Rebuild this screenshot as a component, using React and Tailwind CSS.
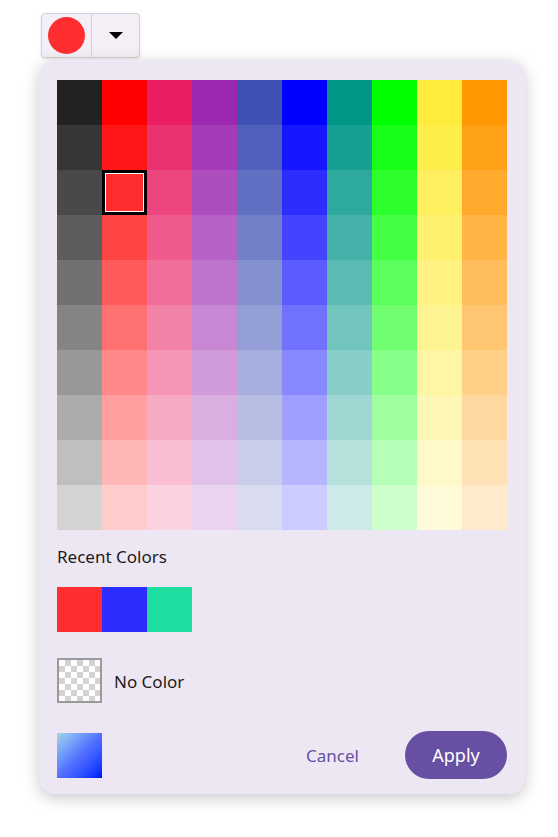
import React, { useState } from 'react';

const baseColors = [
  '#222222', '#ff0000', '#e91e63', '#9c27b0', '#3f51b5',
  '#0000ff', '#009688', '#00ff00', '#ffeb3b', '#ff9800',
];

// lighten towards white, one step per row
const tint = (hex, f) => {
  const n = parseInt(hex.slice(1), 16);
  const c = [(n >> 16) & 255, (n >> 8) & 255, n & 255].map(v => Math.round(v + (255 - v) * f));
  return `rgb(${c[0]}, ${c[1]}, ${c[2]})`;
};

const rows = Array.from({ length: 10 }, (_, i) => baseColors.map(c => tint(c, i * 0.089)));

const recentColors = ['#ff2d2f', '#2d2dff', '#1ddea0'];

const App = () => {
  const [selected, setSelected] = useState({ row: 2, col: 1 });

  return (
    <div className="min-h-screen bg-white pt-[13px] pl-[39px] font-['Noto_Sans','Open_Sans',sans-serif] text-[#1d1b20]">
      {/* Trigger */}
      <div className="ml-[2px] flex h-[45px] w-[99px] rounded-[4px] border border-[#d4d0d8] bg-[#f4eff7] shadow-sm">
        <div className="flex w-[50px] items-center justify-center border-r border-[#d4d0d8]">
          <div className="h-[37px] w-[37px] rounded-full bg-[#ff2d2f]" />
        </div>
        <div className="flex flex-1 items-center justify-center">
          <div className="h-0 w-0 border-x-[7px] border-t-[7px] border-x-transparent border-t-black" />
        </div>
      </div>

      {/* Popup */}
      <div className="mt-[2px] w-[486px] rounded-[16px] bg-[#ede7f3] px-[18px] pt-[20px] pb-[15px] shadow-[0_4px_16px_rgba(0,0,0,0.22)]">
        <div className="grid grid-cols-10">
          {rows.map((row, r) =>
            row.map((color, c) => {
              const isSel = selected.row === r && selected.col === c;
              return (
                <div
                  key={`${r}-${c}`}
                  onClick={() => setSelected({ row: r, col: c })}
                  className={`h-[45px] w-[45px] cursor-pointer ${isSel ? 'border-[3px] border-black' : ''}`}
                  style={{ backgroundColor: color }}
                >
                  {isSel && <div className="h-full w-full border border-white" />}
                </div>
              );
            })
          )}
        </div>

        <div className="mt-[17px] text-[17px] leading-[20px]">Recent Colors</div>

        <div className="mt-[20px] flex">
          {recentColors.map(c => (
            <div key={c} className="h-[45px] w-[45px]" style={{ backgroundColor: c }} />
          ))}
        </div>

        <div className="mt-[26px] flex items-center gap-[12px]">
          <div className="h-[45px] w-[45px] border-2 border-[#9a9a9a] bg-white bg-[repeating-conic-gradient(#d3d3d3_0_25%,#ffffff_0_50%)] bg-size-[12px_12px]" />
          <span className="pt-[3px] text-[17px]">No Color</span>
        </div>

        <div className="mt-[28px] flex items-center">
          <div className="h-[45px] w-[45px] bg-gradient-to-br from-[#a6d4ea] via-[#5570ff] to-[#0000ff]" />
          <button className="ml-auto mr-[46px] pt-[1px] text-[17px] text-[#6750a4]">Cancel</button>
          <button className="h-[48px] w-[102px] rounded-full bg-[#6750a4] text-[18px] text-white">Apply</button>
        </div>
      </div>
    </div>
  );
};

export default App;
